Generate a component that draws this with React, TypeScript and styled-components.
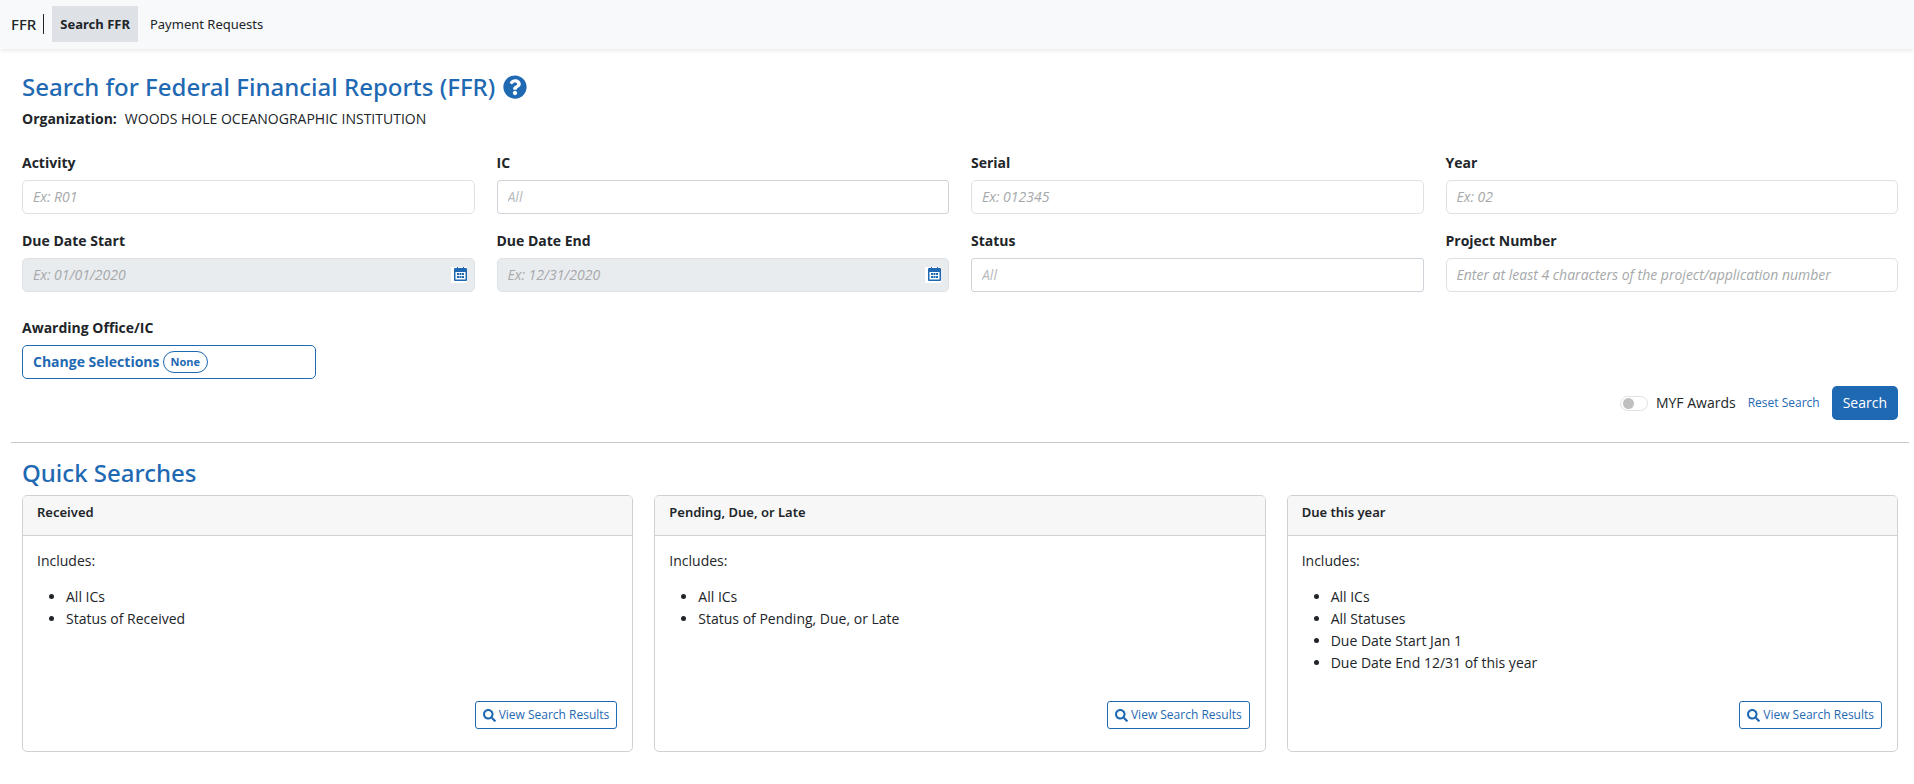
import React from "react";
import styled, { createGlobalStyle, css } from "styled-components";
import { FaQuestionCircle, FaSearch } from "react-icons/fa";

const blue = "#1f69b3";
const ink = "#212529";
const headingFont = `"Segoe UI", "Noto Sans", sans-serif`;

const GlobalStyle = createGlobalStyle`
  *, *::before, *::after { box-sizing: border-box; }
  body {
    margin: 0;
    background: #fff;
    color: ${ink};
    font-family: "Segoe UI", "Open Sans", "Noto Sans", sans-serif;
    font-size: 14px;
    line-height: 22px;
  }
  button, input { font: inherit; color: inherit; }
  h1, h2, h3, p, ul { margin: 0; }
  a { text-decoration: none; }
`;

const NavBar = styled.nav`
  display: flex;
  align-items: flex-start;
  height: 49px;
  padding: 6px 11px;
  background: #f8f9fa;
  box-shadow: 0 2px 4px rgba(0, 0, 0, 0.08);
  font-family: ${headingFont};
  font-size: 13px;
`;

const Brand = styled.span`
  display: flex;
  align-items: center;
  height: 36px;
  font-size: 15px;
  font-weight: 500;

  &::after {
    content: "";
    height: 20px;
    margin: 0 8px 0 7px;
    border-left: 1px solid ${ink};
  }
`;

const NavLink = styled.a<{ $active?: boolean }>`
  padding: 7px 8px;
  color: ${ink};
  ${({ $active }) =>
    $active
      ? css`
          background: #dee2e6;
          font-weight: 700;
        `
      : css`
          padding-left: 12px;
        `}
`;

const Main = styled.main`
  padding: 22px 5px 0 11px;
`;

const Section = styled.section`
  padding: 0 11px;
`;

const Title = styled.h1`
  display: flex;
  align-items: center;
  gap: 8px;
  height: 32px;
  color: ${blue};
  font-family: ${headingFont};
  font-size: 24px;
  font-weight: 500;
  line-height: 32px;
`;

const HelpButton = styled.button`
  display: flex;
  padding: 0;
  border: 0;
  background: none;
  color: ${blue};
`;

const Organization = styled.p`
  display: flex;
  gap: 8px;
  margin: 5px 0 22px;
`;

const Fields = styled.div`
  display: grid;
  grid-template-columns: repeat(4, minmax(0, 1fr));
  gap: 16px 22px;
`;

const Field = styled.div`
  display: flex;
  flex-direction: column;
  gap: 6px;
`;

const Label = styled.label`
  font-weight: 700;
`;

const Control = styled.div<{ $kind: FieldKind }>`
  display: flex;
  align-items: center;
  height: 34px;
  padding: 0 7px 0 10px;
  border: 1px solid ${({ $kind }) => ($kind === "pick" ? "#ced4da" : "#dee2e6")};
  border-radius: ${({ $kind }) => ($kind === "pick" ? 3 : 5)}px;
  background: ${({ $kind }) => ($kind === "date" ? "#e9ecef" : "#fff")};
`;

const TextInput = styled.input<{ $kind: FieldKind }>`
  flex: 1;
  min-width: 0;
  padding: 0;
  border: 0;
  outline: 0;
  background: transparent;

  &::placeholder {
    color: ${({ $kind }) => ($kind === "pick" ? "#b8babc" : "#a6a8aa")};
    font-style: italic;
    opacity: 1;
  }
`;

const CalendarButton = styled.button`
  display: flex;
  justify-content: flex-end;
  width: 16px;
  height: 16px;
  padding: 0;
  border: 0;
  background: #fff;
  color: ${blue};
`;

const Awarding = styled.div`
  display: flex;
  flex-direction: column;
  gap: 6px;
  width: 294px;
  margin-top: 25px;
`;

const SelectionButton = styled.button`
  display: flex;
  align-items: center;
  gap: 3px;
  height: 34px;
  padding: 0 10px;
  border: 1px solid ${blue};
  border-radius: 5px;
  background: #fff;
  color: ${blue};
  font-weight: 700;
`;

const Badge = styled.span`
  padding: 0 7px;
  border: 1px solid ${blue};
  border-radius: 11px;
  font-size: 11px;
  line-height: 20px;
`;

const Actions = styled.div`
  display: flex;
  align-items: center;
  justify-content: flex-end;
  gap: 12px;
  margin-top: 7px;
`;

const SwitchLabel = styled.label`
  display: flex;
  align-items: center;
  gap: 8px;
`;

const Switch = styled.input`
  appearance: none;
  display: flex;
  align-items: center;
  width: 28px;
  height: 15px;
  margin: 0;
  padding: 0 2px;
  border: 1px solid #dee2e6;
  border-radius: 8px;
  background: #fff;

  &::before {
    content: "";
    width: 11px;
    height: 11px;
    border-radius: 50%;
    background: #bfbfbf;
  }

  &:checked {
    justify-content: flex-end;
  }
`;

const ResetLink = styled.a`
  color: ${blue};
  font-size: 12px;
`;

const SearchButton = styled.button`
  height: 34px;
  padding: 0 11px;
  border: 0;
  border-radius: 5px;
  background: ${blue};
  color: #fff;
`;

const Divider = styled.hr`
  height: 1px;
  margin: 22px 0 14px;
  border: 0;
  background: #c8c9ca;
`;

const Heading = styled.h2`
  margin-bottom: 6px;
  color: ${blue};
  font-family: ${headingFont};
  font-size: 24px;
  font-weight: 500;
  line-height: 32px;
`;

const Cards = styled.div`
  display: grid;
  grid-template-columns: repeat(3, minmax(0, 1fr));
  gap: 21px;
`;

const Card = styled.article`
  display: flex;
  flex-direction: column;
  min-height: 257px;
  border: 1px solid #d0d1d2;
  border-radius: 5px;
`;

const CardTitle = styled.h3`
  height: 40px;
  padding: 5px 14px;
  border-bottom: 1px solid #d0d1d2;
  border-radius: 4px 4px 0 0;
  background: #f7f7f7;
  font-family: ${headingFont};
  font-size: 13px;
  font-weight: 600;
`;

const CardBody = styled.div`
  display: flex;
  flex: 1;
  flex-direction: column;
  padding: 14px 15px 22px 14px;
`;

const Criteria = styled.ul`
  margin: 14px 0;
  padding-left: 29px;
`;

const ResultsButton = styled.button`
  display: flex;
  align-items: center;
  align-self: flex-end;
  gap: 3px;
  height: 28px;
  margin-top: auto;
  padding: 0 7px;
  border: 1px solid ${blue};
  border-radius: 3px;
  background: #fff;
  color: ${blue};
  font-size: 12px;
`;

const CalendarIcon = () => (
  <svg width="13" height="15" viewBox="0 0 13 15" aria-hidden="true">
    <path fill="currentColor" d="M1 1h2V0h1v1h5V0h1v1h2a1 1 0 0 1 1 1v11a1 1 0 0 1-1 1H1a1 1 0 0 1-1-1V2a1 1 0 0 1 1-1z" />
    <path fill="#fff" d="M1.500 5h10v7.500h-10z" />
    <path fill="currentColor" d="M3 6h2v2H3zM5.500 6h2v2h-2zM8 6h2v2H8zM3 9h2v2H3zM5.500 9h2v2h-2zM8 9h2v2H8z" />
  </svg>
);

type FieldKind = "text" | "pick" | "date";

const fields: { id: string; label: string; hint: string; kind: FieldKind }[] = [
  { id: "activity", label: "Activity", hint: "Ex: R01", kind: "text" },
  { id: "ic", label: "IC", hint: "All", kind: "pick" },
  { id: "serial", label: "Serial", hint: "Ex: 012345", kind: "text" },
  { id: "year", label: "Year", hint: "Ex: 02", kind: "text" },
  { id: "due-start", label: "Due Date Start", hint: "Ex: 01/01/2020", kind: "date" },
  { id: "due-end", label: "Due Date End", hint: "Ex: 12/31/2020", kind: "date" },
  { id: "status", label: "Status", hint: "All", kind: "pick" },
  {
    id: "project",
    label: "Project Number",
    hint: "Enter at least 4 characters of the project/application number",
    kind: "text",
  },
];

const quickSearches = [
  { title: "Received", criteria: ["All ICs", "Status of Received"] },
  { title: "Pending, Due, or Late", criteria: ["All ICs", "Status of Pending, Due, or Late"] },
  {
    title: "Due this year",
    criteria: ["All ICs", "All Statuses", "Due Date Start Jan 1", "Due Date End 12/31 of this year"],
  },
];

export default function App() {
  return (
    <>
      <GlobalStyle />
      <NavBar>
        <Brand>FFR</Brand>
        <NavLink href="#search" $active>
          Search FFR
        </NavLink>
        <NavLink href="#payments">Payment Requests</NavLink>
      </NavBar>
      <Main>
        <Section>
          <Title>
            Search for Federal Financial Reports (FFR)
            <HelpButton type="button" aria-label="Help">
              <FaQuestionCircle size={24} />
            </HelpButton>
          </Title>
          <Organization>
            <strong>Organization:</strong>
            <span>WOODS HOLE OCEANOGRAPHIC INSTITUTION</span>
          </Organization>
          <form onSubmit={(event) => event.preventDefault()}>
            <Fields>
              {fields.map(({ id, label, hint, kind }) => (
                <Field key={id}>
                  <Label htmlFor={id}>{label}</Label>
                  <Control $kind={kind}>
                    <TextInput id={id} type="text" placeholder={hint} readOnly={kind === "date"} $kind={kind} />
                    {kind === "date" && (
                      <CalendarButton type="button" aria-label={`Choose ${label}`}>
                        <CalendarIcon />
                      </CalendarButton>
                    )}
                  </Control>
                </Field>
              ))}
            </Fields>
            <Awarding>
              <Label htmlFor="awarding">Awarding Office/IC</Label>
              <SelectionButton id="awarding" type="button">
                Change Selections <Badge>None</Badge>
              </SelectionButton>
            </Awarding>
            <Actions>
              <SwitchLabel>
                <Switch type="checkbox" role="switch" />
                MYF Awards
              </SwitchLabel>
              <ResetLink href="#reset">Reset Search</ResetLink>
              <SearchButton type="submit">Search</SearchButton>
            </Actions>
          </form>
        </Section>
        <Divider />
        <Section>
          <Heading>Quick Searches</Heading>
          <Cards>
            {quickSearches.map(({ title, criteria }) => (
              <Card key={title}>
                <CardTitle>{title}</CardTitle>
                <CardBody>
                  <p>Includes:</p>
                  <Criteria>
                    {criteria.map((item) => (
                      <li key={item}>{item}</li>
                    ))}
                  </Criteria>
                  <ResultsButton type="button">
                    <FaSearch size={13} />
                    View Search Results
                  </ResultsButton>
                </CardBody>
              </Card>
            ))}
          </Cards>
        </Section>
      </Main>
    </>
  );
}
